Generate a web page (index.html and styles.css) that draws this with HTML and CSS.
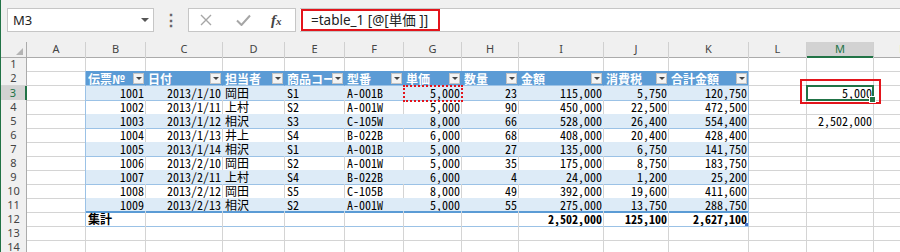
FILE: index.html
```html
<!DOCTYPE html>
<html>
  <head>
    <title>Book1 - Excel</title>
    <link rel="stylesheet" href="styles.css">
  </head>
  <body>
    <div class="window">
      <div class="top">
        <div class="namebox"><span>M3</span><i class="arrow"></i></div>
        <div class="dots">⋮</div>
        <div class="btns">
          <svg class="ico-x" width="12" height="12" viewBox="0 0 12 12"><path d="M1 1 L11 11 M11 1 L1 11" stroke="#a6a6a6" stroke-width="1.4" fill="none"/></svg>
          <svg class="ico-ok" width="15" height="12" viewBox="0 0 15 12"><path d="M1 6.5 L5.5 11 L14 1.5" stroke="#a6a6a6" stroke-width="2" fill="none"/></svg>
          <span class="fx">f<small>x</small></span>
        </div>
        <div class="formula">
          <div class="ref-box">=table_1 [@[単価 ]]</div>
        </div>
      </div>

      <div class="sheet">
        <div class="row colhdr">
          <div class="ch corner"></div>
          <div class="ch">A</div><div class="ch">B</div><div class="ch">C</div><div class="ch">D</div>
          <div class="ch">E</div><div class="ch">F</div><div class="ch">G</div><div class="ch">H</div>
          <div class="ch">I</div><div class="ch">J</div><div class="ch">K</div><div class="ch">L</div>
          <div class="ch on">M</div><div class="ch">N</div>
        </div>

        <div class="row">
          <div class="rh">1</div>
          <div class="c"></div><div class="c"></div><div class="c"></div><div class="c"></div><div class="c"></div>
          <div class="c"></div><div class="c"></div><div class="c"></div><div class="c"></div><div class="c"></div>
          <div class="c"></div><div class="c"></div><div class="c"></div><div class="c"></div>
        </div>

        <div class="row head">
          <div class="rh">2</div>
          <div class="c edge"></div>
          <div class="c t"><span>伝票№</span><i class="dd"></i></div>
          <div class="c t"><span>日付</span><i class="dd"></i></div>
          <div class="c t"><span>担当者</span><i class="dd"></i></div>
          <div class="c t"><span>商品コード</span><i class="dd"></i></div>
          <div class="c t"><span>型番</span><i class="dd"></i></div>
          <div class="c t"><span>単価</span><i class="dd"></i></div>
          <div class="c t"><span>数量</span><i class="dd"></i></div>
          <div class="c t"><span>金額</span><i class="dd"></i></div>
          <div class="c t"><span>消費税</span><i class="dd"></i></div>
          <div class="c t last"><span>合計金額</span><i class="dd"></i></div>
          <div class="c"></div><div class="c"></div><div class="c"></div>
        </div>

        <div class="row band">
          <div class="rh on">3</div>
          <div class="c edge"></div>
          <div class="c t r">1001</div><div class="c t r">2013/1/10</div><div class="c t">岡田</div><div class="c t">S1</div><div class="c t">A-001B</div>
          <div class="c t r ref">5,000</div><div class="c t r">23</div><div class="c t r">115,000</div><div class="c t r">5,750</div><div class="c t r last">120,750</div>
          <div class="c"></div>
          <div class="c r sel">5,000<span class="mark"></span></div>
          <div class="c"></div>
        </div>

        <div class="row">
          <div class="rh">4</div>
          <div class="c edge"></div>
          <div class="c t r">1002</div><div class="c t r">2013/1/11</div><div class="c t">上村</div><div class="c t">S2</div><div class="c t">A-001W</div>
          <div class="c t r">5,000</div><div class="c t r">90</div><div class="c t r">450,000</div><div class="c t r">22,500</div><div class="c t r last">472,500</div>
          <div class="c"></div><div class="c"></div><div class="c"></div>
        </div>

        <div class="row band">
          <div class="rh">5</div>
          <div class="c edge"></div>
          <div class="c t r">1003</div><div class="c t r">2013/1/12</div><div class="c t">相沢</div><div class="c t">S3</div><div class="c t">C-105W</div>
          <div class="c t r">8,000</div><div class="c t r">66</div><div class="c t r">528,000</div><div class="c t r">26,400</div><div class="c t r last">554,400</div>
          <div class="c"></div><div class="c r">2,502,000</div><div class="c"></div>
        </div>

        <div class="row">
          <div class="rh">6</div>
          <div class="c edge"></div>
          <div class="c t r">1004</div><div class="c t r">2013/1/13</div><div class="c t">井上</div><div class="c t">S4</div><div class="c t">B-022B</div>
          <div class="c t r">6,000</div><div class="c t r">68</div><div class="c t r">408,000</div><div class="c t r">20,400</div><div class="c t r last">428,400</div>
          <div class="c"></div><div class="c"></div><div class="c"></div>
        </div>

        <div class="row band">
          <div class="rh">7</div>
          <div class="c edge"></div>
          <div class="c t r">1005</div><div class="c t r">2013/1/14</div><div class="c t">相沢</div><div class="c t">S1</div><div class="c t">A-001B</div>
          <div class="c t r">5,000</div><div class="c t r">27</div><div class="c t r">135,000</div><div class="c t r">6,750</div><div class="c t r last">141,750</div>
          <div class="c"></div><div class="c"></div><div class="c"></div>
        </div>

        <div class="row">
          <div class="rh">8</div>
          <div class="c edge"></div>
          <div class="c t r">1006</div><div class="c t r">2013/2/10</div><div class="c t">岡田</div><div class="c t">S2</div><div class="c t">A-001W</div>
          <div class="c t r">5,000</div><div class="c t r">35</div><div class="c t r">175,000</div><div class="c t r">8,750</div><div class="c t r last">183,750</div>
          <div class="c"></div><div class="c"></div><div class="c"></div>
        </div>

        <div class="row band">
          <div class="rh">9</div>
          <div class="c edge"></div>
          <div class="c t r">1007</div><div class="c t r">2013/2/11</div><div class="c t">上村</div><div class="c t">S4</div><div class="c t">B-022B</div>
          <div class="c t r">6,000</div><div class="c t r">4</div><div class="c t r">24,000</div><div class="c t r">1,200</div><div class="c t r last">25,200</div>
          <div class="c"></div><div class="c"></div><div class="c"></div>
        </div>

        <div class="row">
          <div class="rh">10</div>
          <div class="c edge"></div>
          <div class="c t r">1008</div><div class="c t r">2013/2/12</div><div class="c t">岡田</div><div class="c t">S5</div><div class="c t">C-105B</div>
          <div class="c t r">8,000</div><div class="c t r">49</div><div class="c t r">392,000</div><div class="c t r">19,600</div><div class="c t r last">411,600</div>
          <div class="c"></div><div class="c"></div><div class="c"></div>
        </div>

        <div class="row band end">
          <div class="rh">11</div>
          <div class="c edge"></div>
          <div class="c t r">1009</div><div class="c t r">2013/2/13</div><div class="c t">相沢</div><div class="c t">S2</div><div class="c t">A-001W</div>
          <div class="c t r">5,000</div><div class="c t r">55</div><div class="c t r">275,000</div><div class="c t r">13,750</div><div class="c t r last">288,750</div>
          <div class="c"></div><div class="c"></div><div class="c"></div>
        </div>

        <div class="row total">
          <div class="rh">12</div>
          <div class="c edge"></div>
          <div class="c t">集計</div><div class="c t"></div><div class="c t"></div><div class="c t"></div><div class="c t"></div>
          <div class="c t"></div><div class="c t"></div><div class="c t r">2,502,000</div><div class="c t r">125,100</div><div class="c t r last grip">2,627,100</div>
          <div class="c"></div><div class="c"></div><div class="c"></div>
        </div>

        <div class="row">
          <div class="rh">13</div>
          <div class="c"></div><div class="c"></div><div class="c"></div><div class="c"></div><div class="c"></div>
          <div class="c"></div><div class="c"></div><div class="c"></div><div class="c"></div><div class="c"></div>
          <div class="c"></div><div class="c"></div><div class="c"></div><div class="c"></div>
        </div>

        <div class="row">
          <div class="rh">14</div>
          <div class="c"></div><div class="c"></div><div class="c"></div><div class="c"></div><div class="c"></div>
          <div class="c"></div><div class="c"></div><div class="c"></div><div class="c"></div><div class="c"></div>
          <div class="c"></div><div class="c"></div><div class="c"></div><div class="c"></div>
        </div>
      </div>
    </div>
  </body>
</html>
```

FILE: styles.css
```css
body {
  margin: 0;
  padding: 0;
  background-color: #fff;
  font-family: "Noto Sans", sans-serif;
}

.window {
  border-left: 1px solid #217346;
  height: 252px;
  overflow: hidden;
}

/* formula bar */

.top {
  display: flex;
  height: 42px;
  box-sizing: border-box;
  padding-top: 8px;
  background-color: #f0f0f0;
}

.namebox {
  display: flex;
  align-items: center;
  justify-content: space-between;
  margin-left: 6px;
  width: 147px;
  height: 24px;
  box-sizing: border-box;
  padding: 0 4px 0 5px;
  border: 1px solid #c6c6c6;
  background-color: #fff;
  font-size: 13px;
  color: #222;
}

.namebox .arrow {
  border-top: 4px solid #555;
  border-left: 4px solid transparent;
  border-right: 4px solid transparent;
}

.dots {
  width: 34px;
  height: 24px;
  line-height: 24px;
  text-align: center;
  font-size: 16px;
  font-weight: bold;
  color: #666;
}

.btns {
  display: flex;
  align-items: center;
  width: 108px;
  height: 24px;
  box-sizing: border-box;
  border: 1px solid #c6c6c6;
  background-color: #fff;
}

.ico-x {
  margin-left: 11px;
}

.ico-ok {
  margin-left: 24px;
}

.fx {
  margin-left: 20px;
  font-family: "Liberation Serif", serif;
  font-style: italic;
  font-weight: bold;
  font-size: 15px;
  color: #444;
}

.fx small {
  font-size: 11px;
}

.formula {
  flex: 1;
  margin-left: 4px;
  height: 24px;
  box-sizing: border-box;
  padding: 1px 0 1px 1px;
  border-top: 1px solid #c6c6c6;
  border-bottom: 1px solid #c6c6c6;
  background-color: #fff;
}

.ref-box {
  width: 139px;
  height: 22px;
  box-sizing: border-box;
  margin-top: -1px;
  padding-left: 8px;
  border: 2px solid #e3141b;
  font-family: "Noto Sans", "Noto Sans CJK JP", sans-serif;
  font-size: 13.5px;
  line-height: 18px;
  color: #222;
}

/* grid */

.row {
  display: grid;
  grid-template-columns: 26px 59px 60px 77px 62px 60px 59px 58px 57px 85px 65px 80px 58px 67px 60px;
  height: 14px;
}

.colhdr {
  height: 15px;
  background-color: #f0f0f0;
}

.head {
  height: 15px;
}

.ch {
  box-sizing: border-box;
  border-right: 1px solid #d0d0d0;
  border-bottom: 1px solid #ababab;
  text-align: center;
  font-size: 11px;
  line-height: 14px;
  color: #444;
}

.ch.on {
  background-color: #d2d2d2;
  border-bottom: 2px solid #217346;
  color: #217346;
}

.corner {
  position: relative;
  border-right-color: #ababab;
}

.corner::after {
  content: "";
  position: absolute;
  right: 3px;
  bottom: 2px;
  border-bottom: 7px solid #b4b4b4;
  border-left: 7px solid transparent;
}

.rh {
  box-sizing: border-box;
  border-right: 1px solid #ababab;
  border-bottom: 1px solid #d4d4d4;
  background-color: #f0f0f0;
  text-align: center;
  font-size: 11px;
  line-height: 14px;
  color: #444;
}

.rh.on {
  background-color: #d2d2d2;
  border-right: 2px solid #217346;
  color: #217346;
}

.c {
  box-sizing: border-box;
  padding: 0 2px;
  border-right: 1px solid #d4d4d4;
  border-bottom: 1px solid #d4d4d4;
  font-family: "Noto Sans Mono CJK JP", "Noto Sans CJK JP", monospace;
  font-size: 12px;
  line-height: 13px;
  white-space: nowrap;
  overflow: hidden;
  color: #000;
}

.c.r {
  text-align: right;
  padding-right: 1px;
}

/* table */

.t {
  border-bottom-color: #9bc2e6;
}

.edge,
.t.last,
.band .t.last {
  border-right-color: #9bc2e6;
}

.band .t {
  background-color: #ddebf7;
  border-right-color: #ddebf7;
}

.head .t {
  display: flex;
  align-items: center;
  padding-right: 1px;
  background-color: #5b9bd5;
  border-right-color: #5b9bd5;
  color: #fff;
  font-weight: bold;
}

.head .t.last {
  border-right-color: #9bc2e6;
}

.head .t span {
  flex: 1;
  overflow: hidden;
}

.dd {
  position: relative;
  flex: none;
  width: 11px;
  height: 11px;
  box-sizing: border-box;
  border: 1px solid #c3c3c3;
  background-color: #f3f3f3;
}

.dd::after {
  content: "";
  position: absolute;
  left: 2px;
  top: 3px;
  border-top: 3px solid #444;
  border-left: 3px solid transparent;
  border-right: 3px solid transparent;
}

.end .t {
  border-bottom: 2px solid #5b9bd5;
}

.total .t {
  font-weight: bold;
}

.grip {
  position: relative;
}

.grip::after {
  content: "";
  position: absolute;
  right: 0;
  bottom: 0;
  width: 3px;
  height: 3px;
  background-color: #4472c4;
}

.ref {
  position: relative;
  z-index: 1;
  overflow: visible;
  outline: 2px dotted #e3141b;
  outline-offset: -1px;
}

/* selected cell */

.sel {
  position: relative;
  overflow: visible;
  z-index: 2;
}

.sel::before {
  content: "";
  position: absolute;
  left: -1px;
  top: -1px;
  right: -1px;
  bottom: -1px;
  border: 2px solid #217346;
}

.sel::after {
  content: "";
  position: absolute;
  right: -3px;
  bottom: -3px;
  width: 5px;
  height: 5px;
  border: 1px solid #fff;
  background-color: #217346;
}

.mark {
  position: absolute;
  left: -7px;
  top: -7px;
  width: 81px;
  height: 25px;
  box-sizing: border-box;
  border: 2px solid #e3141b;
}
```
